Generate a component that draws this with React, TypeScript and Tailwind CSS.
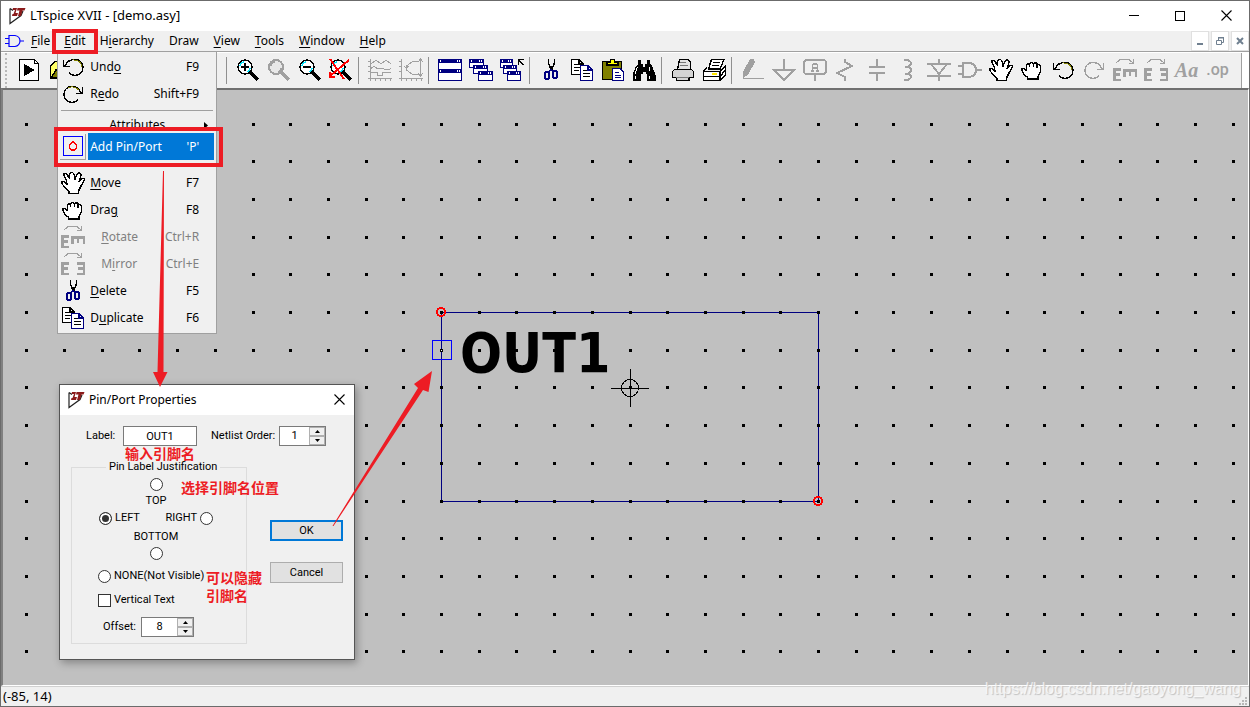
/**
 * Symbol editor window: menu bar with the Edit menu open, toolbar, drawing
 * canvas, Pin/Port dialog and a layer of red tutorial annotations.
 */

import type { ReactNode } from "react";

const GREY = "#a0a0a0";

function Icon({ children, className = "" }: { children: ReactNode; className?: string }) {
  return (
    <svg
      width="24"
      height="24"
      viewBox="0 0 24 24"
      fill="none"
      stroke="black"
      strokeWidth="1.4"
      shapeRendering="crispEdges"
      className={`shrink-0 ${className}`}
      aria-hidden="true"
    >
      {children}
    </svg>
  );
}

function LogoIcon() {
  return (
    <svg width="17" height="18" viewBox="0 0 17 18" fill="none" className="shrink-0" aria-hidden="true">
      <path d="M1 1.5 V16.5 L12 8.5 L14 4 M1 1.5 L4 3.5" stroke="#222" strokeWidth="1.2" />
      <path d="M4 1 H8 L6.5 6 H9 L8 9 H3 L3.5 7 H4.5 L6 3 H3.5 Z" fill="#8b1a1a" />
      <path d="M8.5 1 H16.5 L15.5 3.5 H13.5 L12 9 H9 L10.5 3.5 H8 Z" fill="#8b1a1a" />
    </svg>
  );
}

function GateDocIcon() {
  return (
    <svg width="19" height="14" viewBox="0 0 19 14" fill="none" stroke="#0000ff" strokeWidth="1.2" className="shrink-0" aria-hidden="true">
      <path d="M4 1.5 H10 C13 2 15 4.5 15 7 C15 9.5 13 12 10 12.5 H4 Z M0 4.5 H4 M0 9.5 H4 M15 7 H19" />
    </svg>
  );
}

function RunIcon() {
  return (
    <Icon>
      <path d="M2.5 1.5 H17.5 L21.5 5.5 V22.5 H2.5 Z" fill="white" />
      <path d="M17.5 1.5 V5.5 H21.5" />
      <path d="M7 6 L18 12 L7 18 Z" fill="black" stroke="none" />
    </Icon>
  );
}

function OpenIcon() {
  return (
    <Icon>
      <path d="M2.5 20.5 V8.5 L6.5 3.5 H13 L15 6 H21 V20.5 Z" fill="#ffff66" />
      <path d="M3 20 L8 12 H23 L20 20 Z" fill="#808000" />
    </Icon>
  );
}

function Lens({ off = false }: { off?: boolean }) {
  return (
    <>
      <path d="M14.5 14.5 L22 22" stroke={off ? GREY : "black"} strokeWidth="3" />
      <circle cx="9" cy="9" r="7" fill={off ? "#e8e8e8" : "white"} stroke={off ? GREY : "black"} strokeWidth={off ? 2 : 1.5} />
      <path d="M4 8 A5 5 0 0 1 8 4 M14 10 A5 5 0 0 1 11 14" stroke={off ? GREY : "#00e5ff"} />
    </>
  );
}

function ZoomInIcon() {
  return (
    <Icon>
      <Lens />
      <path d="M5 9 H13 M9 5 V13" strokeWidth="2" />
    </Icon>
  );
}

function ZoomIcon() {
  return (
    <Icon>
      <Lens off />
    </Icon>
  );
}

function ZoomOutIcon() {
  return (
    <Icon>
      <Lens />
      <path d="M5 9 H13" strokeWidth="2" />
    </Icon>
  );
}

function ZoomFitIcon() {
  return (
    <Icon>
      <Lens />
      <path d="M1 1 L15 21 M20 2 L1 18" stroke="red" strokeWidth="2" />
      <path d="M1 14 V19 H6" stroke="red" />
    </Icon>
  );
}

function PlotIcon() {
  return (
    <Icon>
      <g stroke={GREY} strokeWidth="1">
        <path d="M2.5 1 V23 M0 20.5 H24 M0 3.5 H2 M0 8.5 H2 M0 13.5 H2 M7.5 20 V23 M12.5 20 V23 M17.5 20 V23 M22.5 20 V23" />
        <path d="M3 6 L8 2 L13 6 L18 2 L23 6 M3 10.5 Q6 7 9 10.5 H15 Q18 13 23 10.5 M3 14.5 H9 V17.5 H14 V14.5 H23" />
      </g>
    </Icon>
  );
}

function PolarIcon() {
  return (
    <Icon>
      <g stroke={GREY} strokeWidth="1">
        <path d="M2.5 1 V23 M0 20.5 H24 M0 3.5 H2 M0 8.5 H2 M0 13.5 H2 M7.5 20 V23 M12.5 20 V23 M17.5 20 V23 M22.5 20 V23" />
        <path d="M21.5 1 V18 M19 4 L21.5 1 L24 4 M19 15 L21.5 18 L24 15 M20 3 L13 4 L7.5 8 V12 L13 16 L20 17 M5 8 L7 10 L10 8" />
      </g>
    </Icon>
  );
}

// Small application window with a navy title bar
function MiniWindow({ x, y, w, h }: { x: number; y: number; w: number; h: number }) {
  return (
    <>
      <rect x={x} y={y} width={w} height={h} fill="#000080" stroke="none" />
      <rect x={x + 1} y={y + 4} width={w - 2} height={h - 5} fill="white" stroke="none" />
      <path d={`M${x + 2} ${y + 2} h1 M${x + w - 5} ${y + 2} h1 M${x + w - 3} ${y + 2} h1`} stroke="white" />
    </>
  );
}

function TileIcon() {
  return (
    <Icon>
      <MiniWindow x={0} y={1} w={24} h={11} />
      <MiniWindow x={0} y={11} w={24} h={12} />
    </Icon>
  );
}

function CascadeIcon() {
  return (
    <Icon>
      <MiniWindow x={0} y={1} w={15} h={9} />
      <MiniWindow x={4} y={7} w={15} h={9} />
      <MiniWindow x={9} y={13} w={15} h={10} />
    </Icon>
  );
}

function CloseAllIcon() {
  return (
    <Icon>
      <MiniWindow x={0} y={1} w={13} h={9} />
      <MiniWindow x={3} y={7} w={14} h={9} />
      <MiniWindow x={7} y={13} w={14} h={10} />
      <path d="M18.5 7 V1.5 H24 M18.5 1.5 L23.5 7" />
    </Icon>
  );
}

function CutIcon() {
  return (
    <Icon>
      <path d="M9.5 1 V5 L12 12 M15.5 1 V5 L12.5 12" strokeWidth="1.5" />
      <path d="M12 8 V13" strokeWidth="2" />
      <rect x="6" y="14" width="4" height="7" rx="1.5" stroke="#000080" strokeWidth="1.8" />
      <rect x="14" y="13" width="4" height="7" rx="1.5" stroke="#000080" strokeWidth="1.8" />
      <path d="M9 14 L12 12 L15 13" stroke="#000080" strokeWidth="1.8" />
    </Icon>
  );
}

function CopyIcon() {
  return (
    <Icon>
      <path d="M1.5 1.5 H9 L13.5 6 V16.5 H1.5 Z M9 1.5 V6 H13" fill="white" />
      <path d="M4 6.5 H8 M4 9.5 H11 M4 12.5 H9" />
      <path d="M10.5 7.5 H18 L22.5 12 V22.5 H10.5 Z M18 7.5 V12 H22" fill="white" stroke="#000080" />
      <path d="M13 12.5 H17 M13 15.5 H20 M13 18.5 H20" />
    </Icon>
  );
}

function PasteIcon() {
  return (
    <Icon>
      <rect x="1.5" y="3.5" width="19" height="18" rx="1" fill="#808000" />
      <path d="M6 7 V4.5 H9 L10 1.5 H13 L14 4.5 H17 V7 Z" fill="#ffff00" />
      <path d="M11.5 10.5 H19 L22.5 14 V22.5 H11.5 Z" fill="white" stroke="#000080" />
      <path d="M14 14.5 H18 M14 17.5 H20 M14 19.5 H20" stroke="#000080" strokeWidth="1" />
    </Icon>
  );
}

function FindIcon() {
  return (
    <Icon>
      <path
        d="M6 2 H9 V6 H11 V9 H13 V6 H15 V2 H18 V6 L20 8 L23.5 17 V23 H15 V16 H13.5 V14 H10.5 V16 H9 V23 H0.5 V17 L4 8 L6 6 Z"
        fill="black"
        stroke="none"
      />
      <path d="M5.5 9 L3 16 M17 9 V13 M3 18 V21 M17 18 V21" stroke="white" strokeWidth="1" />
    </Icon>
  );
}

function PreviewIcon() {
  return (
    <Icon>
      <path d="M6.5 11 L8.5 1.5 H17 L19.5 4 V11" fill="#e4e4e4" />
      <path d="M3.5 11.5 H20.5 L22.5 13.5 V19.5 H18 V22.5 H5.5 V19.5 H1.5 V13.5 Z" fill="#d4d4d4" />
      <path d="M5 19.5 H18 M9 4.5 H15 M9 7.5 H17" stroke="#777" />
    </Icon>
  );
}

function PrintIcon() {
  return (
    <Icon>
      <path d="M5 9.5 L1.5 13.5 V22.5 H18 L23.5 17 V8 L18 13.5 H1.5" fill="white" />
      <path d="M6.5 11 L9.5 1.5 H22 L18 11 Z" fill="white" />
      <path d="M11 4.5 H18 M10 7.5 H17" />
      <path d="M18 13.5 V22 M1.5 18.5 H18 L23.5 12" />
      <path d="M10 16 H15" stroke="#ffe600" strokeWidth="2" />
    </Icon>
  );
}

function PencilIcon() {
  return (
    <Icon>
      <path d="M9 1 H13 L14 4 L7 17 L2 20 L2 14 Z" fill={GREY} stroke="none" />
      <path d="M2 20.5 H23" stroke={GREY} />
    </Icon>
  );
}

function GroundIcon() {
  return (
    <Icon>
      <path d="M12 1 V11 M1 11.5 H23 L12 22 Z" stroke={GREY} strokeWidth="2" />
    </Icon>
  );
}

function NetLabelIcon() {
  return (
    <Icon>
      <rect x="1" y="2" width="22" height="14" rx="3" stroke={GREY} strokeWidth="2" />
      <path d="M12 16 V23 M8 13 H11 M13 13 H16 M9.5 13 V7 L11 6 H13 L14.5 7 V13 M10 10 H14" stroke={GREY} strokeWidth="1.5" />
    </Icon>
  );
}

function ResistorIcon() {
  return (
    <Icon>
      <path d="M11 1 V4 L18 8 L3 15 L11 19 V23" stroke={GREY} strokeWidth="2" />
    </Icon>
  );
}

function CapacitorIcon() {
  return (
    <Icon>
      <path d="M12 1 V9 M12 16 V23 M4 9 H20 M4 15 H20" stroke={GREY} strokeWidth="2" />
    </Icon>
  );
}

function InductorIcon() {
  return (
    <Icon>
      <path d="M8 2 H12 L14.5 4 V6.5 L12 8.5 H9 M12 8.5 L14.5 10.5 V13.5 L12 15.5 H9 M12 15.5 L14.5 17.5 V20 L12 22 H8" stroke={GREY} strokeWidth="2" />
    </Icon>
  );
}

function DiodeIcon() {
  return (
    <Icon>
      <path d="M12 1 V6 M0 6 H24 M4 6 L12 16 L20 6 M0 17.5 H24 M12 17 V23" stroke={GREY} strokeWidth="2" />
    </Icon>
  );
}

function GateIcon() {
  return (
    <Icon>
      <path d="M5 5 H12 C16 6 18 9 18 12 C18 15 16 18 12 19 H5 Z M0 8 H5 M0 16 H5 M18 12 H24" stroke={GREY} strokeWidth="2" />
    </Icon>
  );
}

function MoveIcon() {
  return (
    <Icon>
      <path
        d="M8 22.5 V20 L4 16.5 L0.8 12.5 V10.5 H3 L6 13 L5.5 9 L2.8 4.5 V2.5 H5.5 L8.8 8 L8.5 3 L9.5 1.5 H11.5 L13 3 L14 8 L16.5 2.5 L18 1.5 L19.8 3 V5 L17.8 11 L21 7.5 H23.2 V9.5 L20 15 L18 19 L17 22.5 Z"
        fill="white"
      />
    </Icon>
  );
}

function DragIcon() {
  return (
    <Icon>
      <path
        d="M7.5 21 V19 L4.5 17 L2 12.5 V11 L4 10.5 L6.5 12.5 V7 L8 5.5 L9.5 6.5 L10.5 4.5 H12.5 L13.5 6 L15 4.5 L17 5.5 V7.5 L18.5 6.5 L20.5 8 V14 L18 18.5 V21 Z"
        fill="white"
      />
      <path d="M9.5 7 V9 M13.5 7 V9 M17 8 V10" />
    </Icon>
  );
}

function UndoIcon() {
  return (
    <Icon>
      <path d="M4 11 C6 6 10 4.5 14 4.5 C19 4.5 22 8 22 12.5 C22 17 18 20.5 14 20.5 C11 20.5 9.5 19.5 8 17.5" />
      <path d="M12 5 C17 4.5 21 8 21 12" stroke="#808000" strokeWidth="1" />
      <path d="M2.5 5 V11.5 H9 M3 11 L6 8" />
    </Icon>
  );
}

function RedoIcon({ off = false }: { off?: boolean }) {
  return (
    <Icon>
      <g stroke={off ? GREY : "black"}>
        <path d="M20 11 C18 6 14 4.5 11 4.5 C6 4.5 3 8 3 12.5 C3 17 7 20.5 11 20.5 C14 20.5 15.5 19.5 17 17.5" />
        <path d="M21.5 5 V11.5 H15 M21 11 L18 8" />
      </g>
      {!off && <path d="M7 6 C11 4 15 5 18 8" stroke="#808000" strokeWidth="1" />}
    </Icon>
  );
}

function RotateIcon() {
  return (
    <Icon>
      <path d="M3 5 L7 1.5 H16 L20 5 M20.5 1 V5.5 H15.5" stroke={GREY} strokeWidth="1.2" />
      <path d="M8 11.5 H1.5 V22 H8 M2 16.5 H7" stroke={GREY} strokeWidth="2.4" />
      <path d="M11.5 19 V12.5 H23 V19 M17 13 V18" stroke={GREY} strokeWidth="2.4" />
    </Icon>
  );
}

function MirrorIcon() {
  return (
    <Icon>
      <path d="M3 5 L7 1.5 H16 L20 5 M20.5 1 V5.5 H15.5" stroke={GREY} strokeWidth="1.2" />
      <path d="M8 11.5 H1.5 V22 H8 M2 16.5 H7" stroke={GREY} strokeWidth="2.4" />
      <path d="M16 11.5 H23 V22 H16 M22 16.5 H17" stroke={GREY} strokeWidth="2.4" />
    </Icon>
  );
}

function PinIcon() {
  return (
    <Icon>
      <rect x="2.5" y="2.5" width="19" height="19" stroke="#0000ff" strokeWidth="1" />
      <path d="M12 7 V9 M10.5 8.5 L8.5 11 V13.5 L10.5 16 H13.5 L15.5 13.5 V11 L13.5 8.5 Z" stroke="red" />
    </Icon>
  );
}

type Tool = { label: string; icon: ReactNode };

const TOOL_GROUPS: Tool[][] = [
  [
    { label: "Zoom in", icon: <ZoomInIcon /> },
    { label: "Pan", icon: <ZoomIcon /> },
    { label: "Zoom out", icon: <ZoomOutIcon /> },
    { label: "Zoom to fit", icon: <ZoomFitIcon /> },
  ],
  [
    { label: "Autorange", icon: <PlotIcon /> },
    { label: "Polar plot", icon: <PolarIcon /> },
  ],
  [
    { label: "Tile windows", icon: <TileIcon /> },
    { label: "Cascade windows", icon: <CascadeIcon /> },
    { label: "Close all", icon: <CloseAllIcon /> },
  ],
  [
    { label: "Cut", icon: <CutIcon /> },
    { label: "Copy", icon: <CopyIcon /> },
    { label: "Paste", icon: <PasteIcon /> },
    { label: "Find", icon: <FindIcon /> },
  ],
  [
    { label: "Print preview", icon: <PreviewIcon /> },
    { label: "Print", icon: <PrintIcon /> },
  ],
  [
    { label: "Wire", icon: <PencilIcon /> },
    { label: "Ground", icon: <GroundIcon /> },
    { label: "Label net", icon: <NetLabelIcon /> },
    { label: "Resistor", icon: <ResistorIcon /> },
    { label: "Capacitor", icon: <CapacitorIcon /> },
    { label: "Inductor", icon: <InductorIcon /> },
    { label: "Diode", icon: <DiodeIcon /> },
    { label: "Component", icon: <GateIcon /> },
    { label: "Move", icon: <MoveIcon /> },
    { label: "Drag", icon: <DragIcon /> },
    { label: "Undo", icon: <UndoIcon /> },
    { label: "Redo", icon: <RedoIcon off /> },
    { label: "Rotate", icon: <RotateIcon /> },
    { label: "Mirror", icon: <MirrorIcon /> },
    {
      label: "Text",
      icon: <span className="font-['Liberation_Serif',serif] text-xl font-bold italic leading-6 text-[#a0a0a0]">Aa</span>,
    },
    {
      label: "SPICE directive",
      icon: <span className="font-['Roboto',sans-serif] text-base font-medium leading-5 text-[#a0a0a0]">.op</span>,
    },
  ],
];

// "&" marks the mnemonic, as in Windows resource files
function Mnemonic({ text }: { text: string }) {
  const at = text.indexOf("&");
  if (at < 0) return <>{text}</>;
  return (
    <>
      {text.slice(0, at)}
      <span className="underline underline-offset-2">{text[at + 1]}</span>
      {text.slice(at + 2)}
    </>
  );
}

function MenuItem({ icon, text, keys, disabled = false }: { icon: ReactNode; text: string; keys: string; disabled?: boolean }) {
  return (
    <button
      type="button"
      role="menuitem"
      disabled={disabled}
      className="flex h-[27px] w-full items-center pl-[3px] pr-[17px] disabled:text-[#808080]"
    >
      {icon}
      <span className={disabled ? "ml-4" : "ml-[5px]"}>
        <Mnemonic text={text} />
      </span>
      <span className="ml-auto">{keys}</span>
    </button>
  );
}

function EditMenu() {
  return (
    <div role="menu" className="absolute left-0 top-full z-20 flex w-40 flex-col border border-[#a0a0a0] bg-[#f0f0f0] pb-0.5 pt-px">
      <MenuItem icon={<UndoIcon />} text="Und&o" keys="F9" />
      <MenuItem icon={<RedoIcon />} text="R&edo" keys="Shift+F9" />
      <hr className="mx-[3px] my-[3px] border-[#a0a0a0]" />
      <button type="button" role="menuitem" className="flex h-[22px] items-center pl-[51px] pr-2 leading-[22px]">
        Attributes
        <svg width="4" height="7" viewBox="0 0 4 7" className="ml-auto" aria-hidden="true">
          <path d="M0 0 L4 3.5 L0 7 Z" />
        </svg>
      </button>
      {/* Raised row: covers the lower edge of the one above */}
      <div className="relative -mt-2 bg-[#f0f0f0] pb-[9px] pt-[5px]">
        <button type="button" role="menuitem" className="flex h-[27px] w-full items-center gap-0.5 px-0.5">
          <span className="flex h-[26px] w-[26px] shrink-0 items-center justify-center border-b border-r border-[#a0a0a0]">
            <PinIcon />
          </span>
          <span className="flex h-[27px] flex-1 items-center justify-between bg-[#0078d7] pl-0.5 pr-[15px] text-white">
            <span>Add Pin/Port</span>
            <span>'P'</span>
          </span>
        </button>
      </div>
      <MenuItem icon={<MoveIcon />} text="&Move" keys="F7" />
      <MenuItem icon={<DragIcon />} text="Dra&g" keys="F8" />
      <MenuItem icon={<RotateIcon />} text="&Rotate" keys="Ctrl+R" disabled />
      <MenuItem icon={<MirrorIcon />} text="M&irror" keys="Ctrl+E" disabled />
      <MenuItem icon={<CutIcon />} text="&Delete" keys="F5" />
      <MenuItem icon={<CopyIcon />} text="D&uplicate" keys="F6" />
    </div>
  );
}

function CrossIcon() {
  return (
    <svg width="11" height="11" viewBox="0 0 11 11" stroke="black" strokeWidth="1.1" aria-hidden="true">
      <path d="M0.5 0.5 L10.5 10.5 M10.5 0.5 L0.5 10.5" />
    </svg>
  );
}

function TitleBar() {
  return (
    <header className="flex h-[30px] items-center bg-white pb-px pl-2">
      <LogoIcon />
      <h1 className="ml-1 text-[13px]">LTspice XVII - [demo.asy]</h1>
      <div className="ml-auto flex h-full">
        <button type="button" aria-label="Minimize" className="flex w-[46px] items-center justify-center">
          <span className="h-px w-2.5 bg-black" />
        </button>
        <button type="button" aria-label="Maximize" className="flex w-[46px] items-center justify-center">
          <span className="h-2.5 w-2.5 border border-black" />
        </button>
        <button type="button" aria-label="Close" className="flex w-[46px] items-center justify-center">
          <CrossIcon />
        </button>
      </div>
    </header>
  );
}

function MenuBar() {
  return (
    <nav className="flex h-[21px] items-stretch border-b border-[#a0a0a0] pl-1">
      <span className="flex items-center">
        <GateDocIcon />
      </span>
      <button type="button" className="px-[7px]">
        <Mnemonic text="&File" />
      </button>
      <div className="relative flex">
        <button type="button" aria-expanded="true" className="px-[7px]">
          <Mnemonic text="&Edit" />
        </button>
        <EditMenu />
      </div>
      <div className="flex gap-px">
        {["H&ierarchy", "Draw", "&View", "&Tools", "&Window", "&Help"].map((text) => (
          <button key={text} type="button" className="px-[7px]">
            <Mnemonic text={text} />
          </button>
        ))}
      </div>
      <div className="ml-auto flex gap-0.5">
        <button type="button" aria-label="Minimize document" className="flex w-[18px] items-end justify-center border border-[#e0e0e0] bg-white pb-[5px]">
          <span className="h-0.5 w-1.5 bg-[#708090]" />
        </button>
        <button type="button" aria-label="Restore document" className="flex w-[18px] items-center justify-center border border-[#e0e0e0] bg-white">
          <svg width="8" height="8" viewBox="0 0 8 8" fill="none" stroke="#708090" aria-hidden="true">
            <path d="M2.5 3 V1 H7.5 V5.5 H6 M0.5 3.5 H5.5 V7.5 H0.5 Z M2 0.5 H8" />
          </svg>
        </button>
        <button type="button" aria-label="Close document" className="flex w-[18px] items-center justify-center border border-[#e0e0e0] bg-white">
          <svg width="8" height="8" viewBox="0 0 8 8" stroke="#708090" strokeWidth="2" aria-hidden="true">
            <path d="M1 1 L7 7 M7 1 L1 7" />
          </svg>
        </button>
      </div>
    </nav>
  );
}

function ToolButton({ label, icon }: Tool) {
  return (
    <button type="button" aria-label={label} className="flex w-[31px] shrink-0 items-center justify-center pb-0.5">
      {icon}
    </button>
  );
}

function Toolbar() {
  return (
    <div className="flex h-9 items-stretch overflow-hidden border-t border-white">
      <div className="ml-1 mr-1.5 w-0.5 border-l-2 border-dotted border-[#b8b8b8]" />
      <ToolButton label="Run" icon={<RunIcon />} />
      <ToolButton label="Open" icon={<OpenIcon />} />
      <div className="w-[149px] shrink-0" />
      {TOOL_GROUPS.map((group) => (
        <div key={group[0].label} className="flex shrink-0">
          <div className="my-1 ml-0.5 mr-[5px] w-px bg-[#909090]" />
          {group.map((tool) => (
            <ToolButton key={tool.label} {...tool} />
          ))}
        </div>
      ))}
      <div className="ml-auto w-2 shrink-0 border-l border-[#a0a0a0] bg-white" />
    </div>
  );
}

// Grid pitch and symbol origin on the canvas
const PITCH = 37.7;
const ORIGIN = { x: 438, y: 222 };

function SymbolCanvas() {
  const dots: ReactNode[] = [];
  for (let row = -5; row <= 9; row++) {
    for (let col = -11; col <= 21; col++) {
      dots.push(
        <rect
          key={`${row}/${col}`}
          x={Math.round(ORIGIN.x + col * PITCH) - 1}
          y={Math.round(ORIGIN.y + row * PITCH) - 1}
          width="3"
          height="3"
        />
      );
    }
  }
  return (
    <svg className="absolute inset-0 h-full w-full" shapeRendering="crispEdges" aria-label="Symbol drawing">
      <text x="457" y="282" fontSize="55" fontWeight="700" className="font-['DejaVu_Sans_Condensed','Noto_Sans',sans-serif]">
        OUT1
      </text>
      <rect x="438.5" y="222.5" width="377" height="189" fill="none" stroke="#000080" />
      {dots}
      {/* Corner handles */}
      <circle cx="438" cy="222" r="4" fill="none" stroke="red" strokeWidth="2" />
      <circle cx="815" cy="411" r="4" fill="none" stroke="red" strokeWidth="2" />
      {/* Pin marker */}
      <rect x="429.5" y="250.5" width="19" height="19" fill="none" stroke="#0000ff" />
      <rect x="438" y="260" width="1" height="1" fill="white" />
      {/* Anchor */}
      <path d="M608 298.5 H646 M627.5 279 V317" stroke="black" />
      <circle cx="627" cy="298" r="8.5" fill="none" stroke="black" />
    </svg>
  );
}

function Spinner({ id, value, className }: { id: string; value: string; className: string }) {
  return (
    <span className={`flex h-5 border border-[#7a7a7a] bg-white ${className}`}>
      <input id={id} defaultValue={value} className="w-full min-w-0 flex-1 text-center outline-none" />
      <span className="flex w-4 shrink-0 flex-col">
        <button type="button" aria-label="Increase" className="flex flex-1 items-center justify-center border border-[#b0b0b0] bg-[#f0f0f0]">
          <svg width="5" height="3" viewBox="0 0 5 3" aria-hidden="true">
            <path d="M0 3 L2.5 0 L5 3 Z" />
          </svg>
        </button>
        <button type="button" aria-label="Decrease" className="flex flex-1 items-center justify-center border border-[#b0b0b0] bg-[#f0f0f0]">
          <svg width="5" height="3" viewBox="0 0 5 3" aria-hidden="true">
            <path d="M0 0 L2.5 3 L5 0 Z" />
          </svg>
        </button>
      </span>
    </span>
  );
}

function Radio({ id, checked = false }: { id: string; checked?: boolean }) {
  return (
    <input
      id={id}
      type="radio"
      name="justification"
      defaultChecked={checked}
      className="h-[13px] w-[13px] shrink-0 appearance-none rounded-full border border-[#333] bg-white checked:bg-[#333] checked:shadow-[inset_0_0_0_2px_white]"
    />
  );
}

function PinDialog() {
  return (
    <section
      role="dialog"
      aria-labelledby="pin-title"
      className="absolute left-14 top-[294px] z-10 flex w-[296px] flex-col border border-[#555] bg-[#f0f0f0] shadow-[2px_3px_8px_rgba(0,0,0,0.3)]"
    >
      <div className="flex h-[30px] items-center bg-white pb-px pl-2 pr-[9px]">
        <LogoIcon />
        <h2 id="pin-title" className="ml-1">
          Pin/Port Properties
        </h2>
        <button type="button" aria-label="Close dialog" className="ml-auto">
          <CrossIcon />
        </button>
      </div>

      <form className="px-[11px] pb-[15px] pt-[11px] font-['Roboto',sans-serif] text-[11px] leading-[14px]">
        <div className="flex items-center pl-[15px]">
          <label htmlFor="pin-label" className="w-[37px]">
            Label:
          </label>
          <input id="pin-label" defaultValue="OUT1" className="h-5 w-[74px] border border-[#7a7a7a] bg-white text-center outline-none" />
          <label htmlFor="netlist-order" className="ml-[14px] w-[68px] whitespace-nowrap">
            Netlist Order:
          </label>
          <Spinner id="netlist-order" value="1" className="w-[47px]" />
        </div>

        <div className="mt-[14px] flex items-start">
          <fieldset className="w-44 border border-[#dcdcdc] pb-[6px]">
            <legend className="ml-[34px] px-[3px]">Pin Label Justification</legend>
            <div className="flex flex-col items-center pr-1.5 pt-1">
              <Radio id="just-top" />
              <label htmlFor="just-top" className="mt-[3px]">
                TOP
              </label>
            </div>
            <div className="mt-[3px] flex items-center pl-[27px]">
              <Radio id="just-left" checked />
              <label htmlFor="just-left" className="ml-[3px]">
                LEFT
              </label>
              <label htmlFor="just-right" className="ml-auto">
                RIGHT
              </label>
              <span className="ml-[3px] mr-[33px] flex">
                <Radio id="just-right" />
              </span>
            </div>
            <div className="mt-[5px] flex flex-col items-center pr-1.5">
              <label htmlFor="just-bottom" className="mb-[3px]">
                BOTTOM
              </label>
              <Radio id="just-bottom" />
            </div>
            <div className="mt-[9px] flex items-center pl-[26px]">
              <Radio id="just-none" />
              <label htmlFor="just-none" className="ml-[3px] whitespace-nowrap">
                NONE(Not Visible)
              </label>
            </div>
            <div className="mt-[10px] flex items-center pl-[26px]">
              <input id="vertical" type="checkbox" className="h-[13px] w-[13px] appearance-none border border-[#333] bg-white" />
              <label htmlFor="vertical" className="ml-[3px]">
                Vertical Text
              </label>
            </div>
            <div className="mt-[10px] flex items-center pl-[31px]">
              <label htmlFor="offset" className="w-[38px]">
                Offset:
              </label>
              <Spinner id="offset" value="8" className="w-[53px]" />
            </div>
          </fieldset>
          <div className="ml-auto mt-[60px] flex w-[73px] flex-col gap-[21px]">
            <button type="button" className="h-[21px] border-2 border-[#0078d7] bg-[#e1e1e1]">
              OK
            </button>
            <button type="button" className="h-[21px] border border-[#adadad] bg-[#e1e1e1]">
              Cancel
            </button>
          </div>
        </div>
      </form>
    </section>
  );
}

// Red boxes, arrows and notes drawn over the window
function Annotations() {
  return (
    <div className="pointer-events-none absolute inset-0 z-30 font-['Noto_Sans_CJK_SC',sans-serif] text-sm font-bold leading-[18px] text-[#ed1c24]">
      <svg className="absolute inset-0 h-full w-full" fill="none" stroke="#ed1c24" strokeWidth="4" aria-hidden="true">
        <rect x="53" y="30" width="42" height="21" />
        <rect x="55" y="128" width="165" height="36" />
        <path d="M162 170 H163 L162.5 371 L166.5 371 L159 386 L152 371 L156.5 371 Z" fill="#ed1c24" stroke="none" />
        <path d="M331.5 525 L417 387 L413 383 L431 370 L427.5 391 L422 389 L332.5 525 Z" fill="#ed1c24" stroke="none" />
      </svg>
      <p className="absolute left-[124px] top-[445px] leading-[14px]">输入引脚名</p>
      <p className="absolute left-[180px] top-[477px]">选择引脚名位置</p>
      <p className="absolute left-[205px] top-[567px]">
        可以隐藏
        <br />
        引脚名
      </p>
    </div>
  );
}

export default function App() {
  return (
    <div className="relative flex min-h-screen flex-col border border-[#6b6b6b] bg-[#f0f0f0] font-['Noto_Sans','Noto_Sans_CJK_SC',sans-serif] text-xs text-black">
      <TitleBar />
      <MenuBar />
      <Toolbar />
      <main className="relative flex-1 border-b border-l-2 border-r border-t-2 border-b-white border-l-[#808080] border-r-white border-t-[#707070] bg-[#c0c0c0]">
        <SymbolCanvas />
        <PinDialog />
      </main>
      <footer className="relative flex h-5 items-center border-t border-[#d0d0d0] pl-0.5">
        <span className="text-[13px]">(-85, 14)</span>
        <span className="absolute bottom-[5px] right-2 font-['Liberation_Sans',sans-serif] text-base leading-6 text-white/70 [text-shadow:1px_1px_1px_#c0c0c0]">
          https://blog.csdn.net/gaoyong_wang
        </span>
        <svg width="8" height="8" viewBox="0 0 8 8" fill="#b8b8b8" className="ml-auto mr-0.5 mt-2" aria-hidden="true">
          <path d="M6 0 h2 v2 h-2 Z M6 3 h2 v2 h-2 Z M3 3 h2 v2 h-2 Z M6 6 h2 v2 h-2 Z M3 6 h2 v2 h-2 Z M0 6 h2 v2 h-2 Z" />
        </svg>
      </footer>
      <Annotations />
    </div>
  );
}
